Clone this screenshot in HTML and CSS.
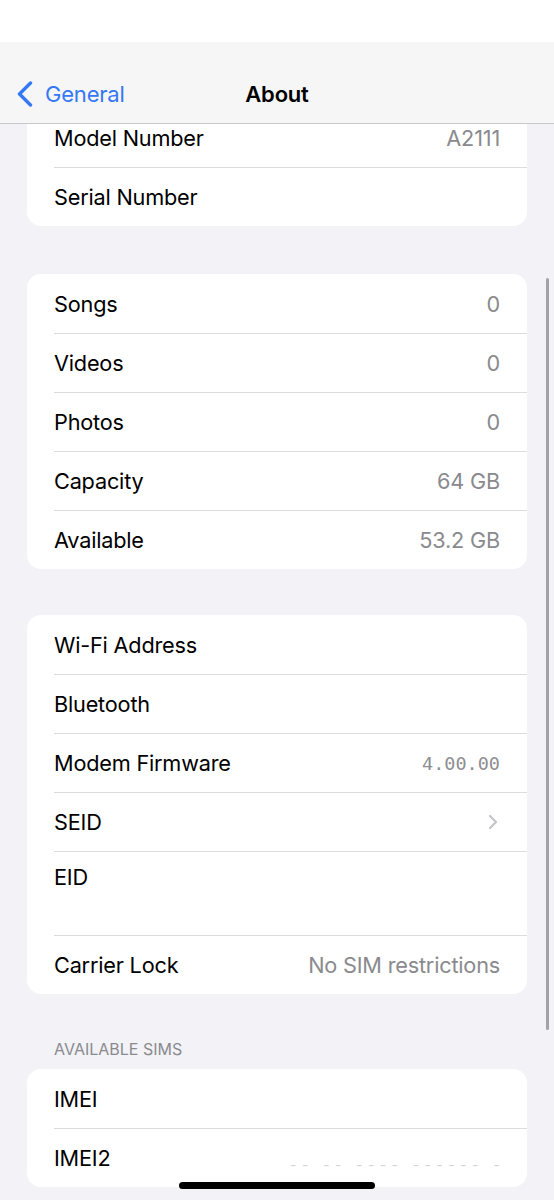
FILE: index.html
```html
<!DOCTYPE html>
<html lang="en">

<head>
  <meta charset="UTF-8" />
  <meta name="viewport" content="width=device-width, initial-scale=1.0" />
  <title>About</title>
  <link rel="stylesheet" href="styles.css">
</head>

<body>

  <div class="status-bar"></div>

  <!-- Navigation bar -->
  <div class="nav">
    <a href="#" class="back">
      <svg class="back-chevron" width="16" height="26" viewBox="0 0 16 26">
        <polyline points="13.5,2 2.5,13 13.5,24" fill="none" stroke="#3478f6" stroke-width="3.4"
          stroke-linecap="round" stroke-linejoin="round" />
      </svg>
      <span>General</span>
    </a>
    <h1 class="title">About</h1>
    <span class="nav-spacer"></span>
  </div>

  <div class="content">

    <div class="card card-top">
      <div class="row"><span class="label">Model Number</span><span class="value">A2111</span></div>
      <div class="row"><span class="label">Serial Number</span><span class="value"></span></div>
    </div>

    <div class="card">
      <div class="row"><span class="label">Songs</span><span class="value">0</span></div>
      <div class="row"><span class="label">Videos</span><span class="value">0</span></div>
      <div class="row"><span class="label">Photos</span><span class="value">0</span></div>
      <div class="row"><span class="label">Capacity</span><span class="value">64 GB</span></div>
      <div class="row"><span class="label">Available</span><span class="value">53.2 GB</span></div>
    </div>

    <div class="card card-gap">
      <div class="row"><span class="label">Wi-Fi Address</span><span class="value"></span></div>
      <div class="row"><span class="label">Bluetooth</span><span class="value"></span></div>
      <div class="row"><span class="label">Modem Firmware</span><span class="value mono">4.00.00</span></div>
      <div class="row">
        <span class="label">SEID</span>
        <svg class="chevron" width="10" height="16" viewBox="0 0 10 16">
          <polyline points="2,2 8,8 2,14" fill="none" stroke="#c4c4c7" stroke-width="2.2"
            stroke-linecap="round" stroke-linejoin="round" />
        </svg>
      </div>
      <div class="row row-tall"><span class="label">EID</span></div>
      <div class="row"><span class="label">Carrier Lock</span><span class="value">No SIM restrictions</span></div>
    </div>

    <p class="section-header">AVAILABLE SIMS</p>

    <div class="card">
      <div class="row"><span class="label">IMEI</span><span class="value"></span></div>
      <div class="row"><span class="label">IMEI2</span><span class="value hidden-value">-- -- ---- ------ -</span></div>
    </div>

  </div>

  <div class="scrollbar"></div>
  <div class="home-indicator"></div>

</body>

</html>
```

FILE: styles.css
```css
body {
  margin: 0;
  height: 1200px;
  overflow: hidden;
  background: #f2f2f7;
  font-family: Inter, 'Liberation Sans', sans-serif;
  color: #000;
}

.status-bar {
  height: 42px;
  background: #ffffff;
}

.nav {
  position: relative;
  z-index: 2;
  box-sizing: border-box;
  height: 82px;
  background: #f6f6f7;
  border-bottom: 1px solid #c9c9cc;
  display: flex;
  align-items: center;
  justify-content: space-between;
  padding: 22px 0 0 17px;
}

.back {
  display: flex;
  align-items: center;
  gap: 12px;
  width: 160px;
  color: #3478f6;
  text-decoration: none;
  font-size: 22px;
  letter-spacing: -0.2px;
}

.title {
  margin: 0;
  font-size: 22px;
  font-weight: 600;
  letter-spacing: -0.2px;
}

.nav-spacer {
  width: 177px;
}

.content {
  padding: 0 27px;
}

.card {
  background: #ffffff;
  border-radius: 14px;
  padding-left: 27px;
  margin-top: 48px;
}

.card-top {
  margin-top: -16px;
}

.card-gap {
  margin-top: 46px;
}

.row {
  height: 59px;
  box-sizing: border-box;
  display: flex;
  align-items: center;
  justify-content: space-between;
  padding-right: 27px;
  font-size: 21.7px;
  letter-spacing: -0.2px;
}

.row+.row {
  border-top: 1px solid #dcdce0;
}

.row-tall {
  height: 84px;
  align-items: flex-start;
  padding-top: 12px;
}

.value {
  color: #8a8a8e;
}

.mono {
  font-family: 'DejaVu Sans Mono', 'Liberation Mono', monospace;
  font-size: 18.5px;
  letter-spacing: 0;
  color: #8e8e92;
}

.chevron {
  margin-right: 2px;
}

.hidden-value {
  color: #d6d6da;
  font-size: 14px;
  letter-spacing: 5.4px;
  margin-right: -5px;
  align-self: flex-end;
  margin-bottom: 14px;
}

.section-header {
  margin: 0;
  padding: 44px 0 0 27px;
  height: 31px;
  line-height: 22px;
  font-size: 16px;
  color: #8a8a8e;
}

.section-header+.card {
  margin-top: 0;
}

.scrollbar {
  position: fixed;
  right: 5px;
  top: 278px;
  width: 3px;
  height: 752px;
  border-radius: 2px;
  background: #a3a3a6;
}

.home-indicator {
  position: fixed;
  left: 179px;
  bottom: 11px;
  width: 196px;
  height: 7px;
  border-radius: 4px;
  background: #000;
}
```
